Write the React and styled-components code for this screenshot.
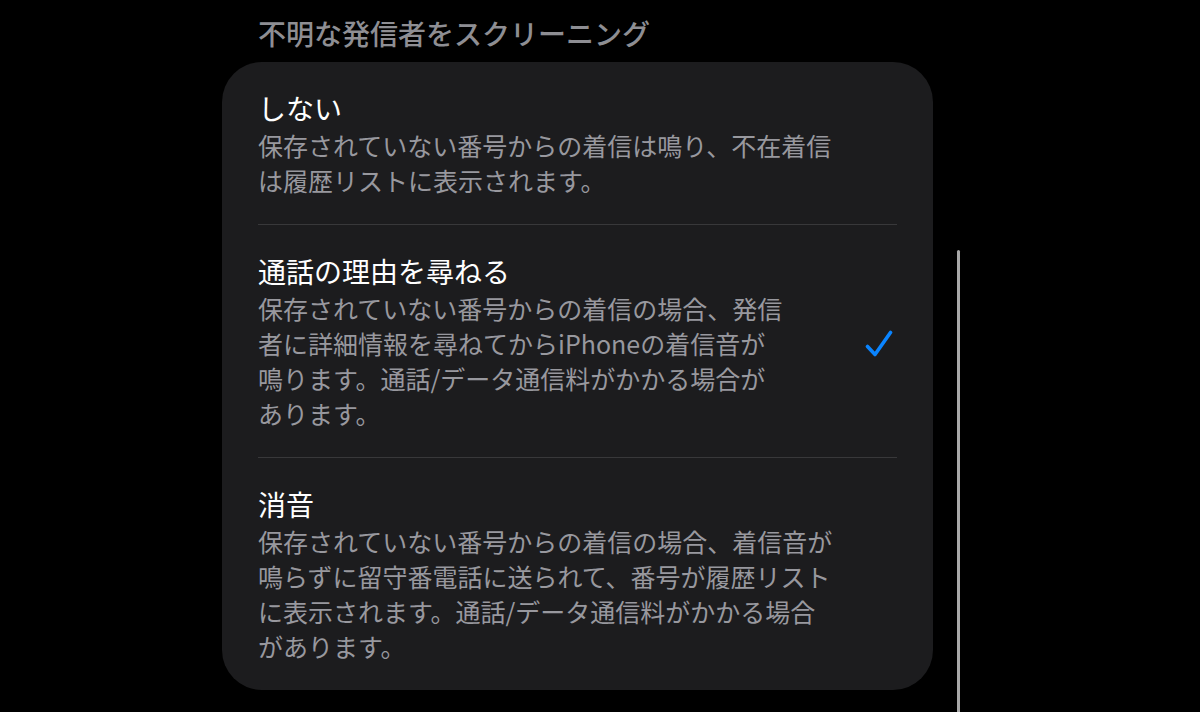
import React from "react";
import styled, { createGlobalStyle } from "styled-components";

const GlobalStyle = createGlobalStyle`
  html, body {
    margin: 0;
    padding: 0;
    background: #000;
    height: 100%;
  }
  body {
    font-family: "Noto Sans CJK JP", "Noto Sans", sans-serif;
    -webkit-font-smoothing: antialiased;
  }
`;

const options = [
  {
    title: "しない",
    lines: ["保存されていない番号からの着信は鳴り、不在着信", "は履歴リストに表示されます。"],
  },
  {
    title: "通話の理由を尋ねる",
    lines: [
      "保存されていない番号からの着信の場合、発信",
      "者に詳細情報を尋ねてからiPhoneの着信音が",
      "鳴ります。通話/データ通信料がかかる場合が",
      "あります。",
    ],
    selected: true,
  },
  {
    title: "消音",
    lines: [
      "保存されていない番号からの着信の場合、着信音が",
      "鳴らずに留守番電話に送られて、番号が履歴リスト",
      "に表示されます。通話/データ通信料がかかる場合",
      "があります。",
    ],
  },
];

export default function App() {
  return (
    <Screen>
      <GlobalStyle />
      <Section>
        <Header>不明な発信者をスクリーニング</Header>
        <Card>
          {options.map((o, i) => (
            <Row key={o.title} $last={i === options.length - 1}>
              <Texts>
                <Title>{o.title}</Title>
                <Desc>
                  {o.lines.map((l) => (
                    <Line key={l}>{l}</Line>
                  ))}
                </Desc>
              </Texts>
              <Check>
                {o.selected && (
                  <svg width="28" height="27" viewBox="0 0 28 27" fill="none">
                    <path
                      d="M2.5 16.5 L10 24.5 L25.5 2.5"
                      stroke="#0a84ff"
                      strokeWidth="3.6"
                      strokeLinecap="round"
                      strokeLinejoin="round"
                    />
                  </svg>
                )}
              </Check>
            </Row>
          ))}
        </Card>
      </Section>
      <ScrollIndicator />
    </Screen>
  );
}

const Screen = styled.div`
  position: relative;
  width: 1200px;
  height: 712px;
  overflow: hidden;
  background: #000;
  padding-top: 15px;
  box-sizing: border-box;
`;

const Section = styled.div`
  width: 711px;
  margin-left: 222px;
`;

const Header = styled.div`
  padding-left: 36px;
  font-size: 28px;
  line-height: 36px;
  font-weight: 500;
  color: #8e8e93;
  margin-bottom: 11px;
  white-space: nowrap;
`;

const Card = styled.div`
  background: #1c1c1e;
  border-radius: 40px;
  padding: 0 36px;
`;

const Row = styled.div`
  display: flex;
  align-items: center;
  padding: 28px 0 26px;
  border-bottom: ${(p) => (p.$last ? "none" : "1px solid #38383a")};
`;

const Texts = styled.div`
  flex: 1;
  min-width: 0;
`;

const Title = styled.div`
  font-size: 28px;
  line-height: 36px;
  color: #fff;
  margin-bottom: 2px;
`;

const Desc = styled.div`
  font-size: 25px;
  line-height: 35px;
  color: #98989e;
`;

const Line = styled.div`
  white-space: nowrap;
`;

const Check = styled.div`
  width: 40px;
  display: flex;
  justify-content: flex-end;
  padding-right: 4px;
  padding-top: 2px;
`;

const ScrollIndicator = styled.div`
  position: absolute;
  left: 957px;
  top: 250px;
  width: 3px;
  height: 480px;
  border-radius: 2px;
  background: #a8a8a8;
`;
